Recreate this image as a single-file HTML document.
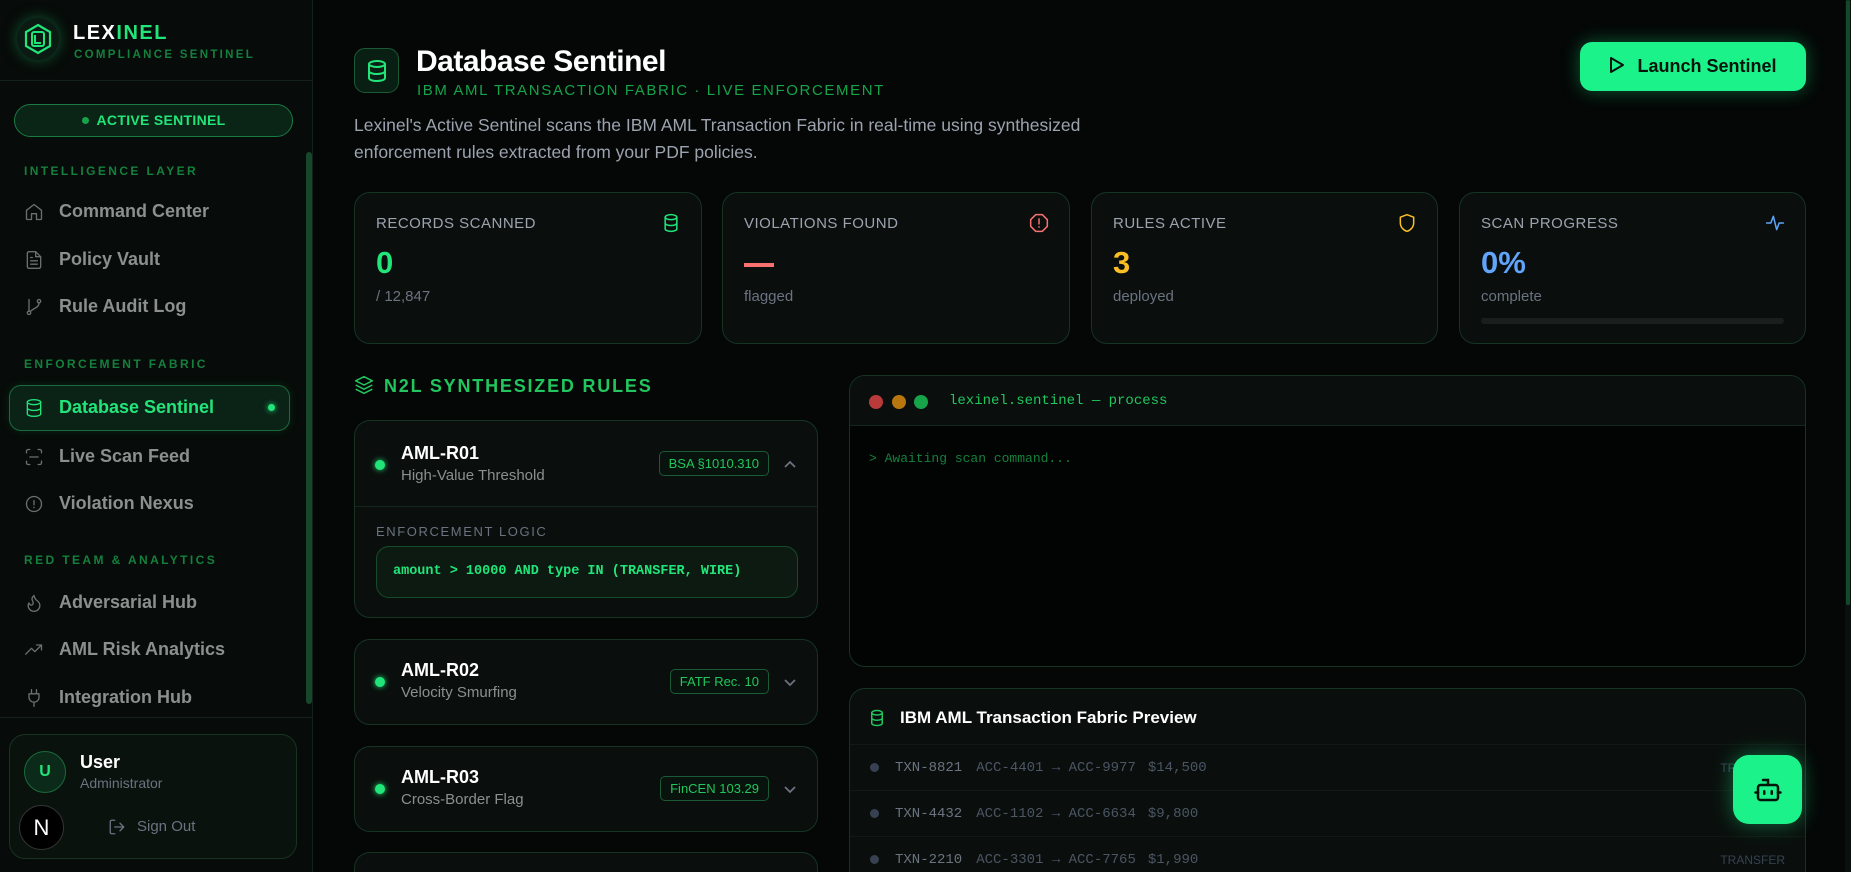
<!DOCTYPE html>
<html><head><meta charset="utf-8"><style>
*{box-sizing:border-box;margin:0;padding:0}
html,body{width:1851px;height:872px;overflow:hidden}
body{background:#040706;font-family:"Liberation Sans",sans-serif;color:#e5e7eb}
#wrap{position:relative;width:1851px;height:872px;overflow:hidden}
.sb{position:absolute;left:0;top:0;width:313px;height:872px;background:#070b09;border-right:1px solid #14201a}
.abs{position:absolute}
.sec{position:absolute;left:24px;font-size:12px;font-weight:bold;letter-spacing:2.4px;color:#15803d}
.nav{position:absolute;left:24px;display:flex;align-items:center;gap:15px;font-size:18px;color:#8b8f8d;font-weight:bold}
.nav svg{width:20px;height:20px;stroke:#6b6f6d;fill:none;stroke-width:1.6;stroke-linecap:round;stroke-linejoin:round}
.card{position:absolute;background:#0a0f0d;border:1px solid #163323;border-radius:16px}
.lbl{position:absolute;left:21px;top:22px;font-size:15px;color:#9ca3af;letter-spacing:.5px}
.num{position:absolute;left:21px;top:52px;font-size:31px;font-weight:bold}
.sub{position:absolute;left:21px;top:95px;font-size:15px;color:#6b7280}
.ic{position:absolute;right:20px;top:20px;width:20px;height:20px;fill:none;stroke-width:1.8;stroke-linecap:round;stroke-linejoin:round}
.rule .dot{position:absolute;left:20px;width:10px;height:10px;border-radius:50%;background:#22e57a;box-shadow:0 0 6px #22e57a}
.rt{position:absolute;left:46px;font-size:18px;font-weight:bold;color:#fff}
.rs{position:absolute;left:46px;font-size:15px;color:#8b8f8d}
.tag{position:absolute;right:48px;height:25px;border:1px solid #1b5a36;border-radius:5px;font-size:13px;color:#22c55e;padding:0 9px;line-height:23px;background:#07130c}
.chev{position:absolute;right:20px;width:14px;height:14px;fill:none;stroke:#6b7280;stroke-width:1.8}
.row{position:absolute;left:0;right:0;height:46px;border-top:1px solid #111815;font-family:"Liberation Mono",monospace;font-size:14px;color:#4b5563;display:flex;align-items:center}
</style></head><body><div id="wrap">
<div class="sb">
  <div class="abs" style="left:17px;top:18px;width:42px;height:42px;border-radius:50%;background:#0b1a12;box-shadow:0 0 14px #0f5a33"></div>
  <svg class="abs" style="left:20px;top:21px" width="36" height="36" viewBox="0 0 36 36"><polygon points="18,4 30,11 30,25 18,32 6,25 6,11" fill="none" stroke="#22e57a" stroke-width="2.2"/><rect x="12" y="11" width="12" height="14" rx="2" fill="none" stroke="#22e57a" stroke-width="2"/><path d="M15 14v8h6" fill="none" stroke="#22e57a" stroke-width="2"/></svg>
  <div class="abs" style="left:73px;top:22px;font-size:20px;font-weight:bold;letter-spacing:1.5px;color:#fff">LEX<span style="color:#22e57a">INEL</span></div>
  <div class="abs" style="left:74px;top:49px;font-size:11.5px;font-weight:bold;letter-spacing:2.3px;color:#15803d">COMPLIANCE SENTINEL</div>
  <div class="abs" style="left:0;top:80px;width:313px;border-top:1px solid #14201a"></div>
  <div class="abs" style="left:14px;top:104px;width:279px;height:33px;border:1px solid #1a7a44;border-radius:17px;background:#0a2416;text-align:center;line-height:31px;font-size:14px;font-weight:bold;color:#22e57a;letter-spacing:.3px"><span style="display:inline-block;width:7px;height:7px;border-radius:50%;background:#16a34a;margin-right:8px;vertical-align:middle;position:relative;top:-1px"></span>ACTIVE SENTINEL</div>
  <div class="abs" style="left:306px;top:152px;width:6px;height:552px;border-radius:3px;background:#14472c"></div>
  <div class="sec" style="top:164px">INTELLIGENCE LAYER</div>
  <div class="nav" style="top:201px"><svg viewBox="0 0 24 24"><path d="M3 10l9-7 9 7v10a1 1 0 0 1-1 1h-5v-7h-6v7H4a1 1 0 0 1-1-1z"/></svg>Command Center</div>
  <div class="nav" style="top:249px"><svg viewBox="0 0 24 24"><path d="M14 2H6a2 2 0 0 0-2 2v16a2 2 0 0 0 2 2h12a2 2 0 0 0 2-2V8z"/><path d="M14 2v6h6M8 13h8M8 17h8M8 9h2"/></svg>Policy Vault</div>
  <div class="nav" style="top:296px"><svg viewBox="0 0 24 24"><circle cx="6" cy="19" r="2"/><circle cx="18" cy="5" r="2"/><path d="M6 3v14M18 7c0 6-6 6-10 10"/></svg>Rule Audit Log</div>
  <div class="sec" style="top:357px">ENFORCEMENT FABRIC</div>
  <div class="abs" style="left:9px;top:385px;width:281px;height:46px;border:1px solid #1a6a3c;border-radius:12px;background:#0b2217;box-shadow:0 0 10px rgba(34,229,122,.12)"></div>
  <div class="nav" style="top:397px;color:#22e57a"><svg viewBox="0 0 24 24" style="stroke:#22e57a"><ellipse cx="12" cy="5" rx="8" ry="3"/><path d="M4 5v14c0 1.7 3.6 3 8 3s8-1.3 8-3V5M4 12c0 1.7 3.6 3 8 3s8-1.3 8-3"/></svg>Database Sentinel</div>
  <div class="abs" style="left:268px;top:404px;width:7px;height:7px;border-radius:50%;background:#22e57a;box-shadow:0 0 6px #22e57a"></div>
  <div class="nav" style="top:446px"><svg viewBox="0 0 24 24"><path d="M3 7V5a2 2 0 0 1 2-2h2M17 3h2a2 2 0 0 1 2 2v2M21 17v2a2 2 0 0 1-2 2h-2M7 21H5a2 2 0 0 1-2-2v-2M7 12h10"/></svg>Live Scan Feed</div>
  <div class="nav" style="top:493px"><svg viewBox="0 0 24 24"><circle cx="12" cy="12" r="9"/><path d="M12 8v5M12 16v.5"/></svg>Violation Nexus</div>
  <div class="sec" style="top:553px">RED TEAM &amp; ANALYTICS</div>
  <div class="nav" style="top:592px"><svg viewBox="0 0 24 24"><path d="M8.5 14.5A2.5 2.5 0 0 0 11 12c0-1.4-.5-2-1-3-1-2.1-.2-4 2-6 .5 2.5 2 4.9 4 6.5 2 1.6 3 3.5 3 5.5a7 7 0 1 1-14 0c0-1.2.4-2.300 1-3.1.3 1.5 1.2 2.6 2.5 2.6z"/></svg>Adversarial Hub</div>
  <div class="nav" style="top:639px"><svg viewBox="0 0 24 24"><path d="M2 17l7-7 4 4 8-8M15 6h6v6"/></svg>AML Risk Analytics</div>
  <div class="nav" style="top:687px"><svg viewBox="0 0 24 24"><path d="M9 2v5M15 2v5M6 7h12v4a6 6 0 0 1-12 0zM12 17v5"/></svg>Integration Hub</div>
  <div class="abs" style="left:0;top:717px;width:313px;border-top:1px solid #14201a"></div>
  <div class="abs" style="left:9px;top:734px;width:288px;height:125px;border:1px solid #163323;border-radius:16px;background:#0a120e"></div>
  <div class="abs" style="left:24px;top:751px;width:42px;height:42px;border-radius:50%;background:#0b2a19;border:1px solid #1a6a3c;text-align:center;line-height:40px;font-weight:bold;font-size:16px;color:#22e57a">U</div>
  <div class="abs" style="left:80px;top:752px;font-size:18px;font-weight:bold;color:#fff">User</div>
  <div class="abs" style="left:80px;top:775px;font-size:14px;color:#6b7280">Administrator</div>
  <div class="abs" style="left:19px;top:805px;width:45px;height:45px;border-radius:50%;background:#000;border:1px solid #333;text-align:center;line-height:43px;font-size:22px;color:#fff">N</div>
  <svg class="abs" style="left:108px;top:818px" width="18" height="18" viewBox="0 0 24 24" fill="none" stroke="#6b7280" stroke-width="1.8" stroke-linecap="round" stroke-linejoin="round"><path d="M9 21H5a2 2 0 0 1-2-2V5a2 2 0 0 1 2-2h4M16 17l5-5-5-5M21 12H9"/></svg>
  <div class="abs" style="left:137px;top:818px;font-size:15px;color:#6b7280">Sign Out</div>
</div>

<div class="abs" style="left:354px;top:48px;width:45px;height:45px;border:1px solid #1a5a36;border-radius:11px;background:#0a1f14"></div>
<svg class="abs" style="left:365px;top:59px" width="24" height="24" viewBox="0 0 24 24" fill="none" stroke="#22e57a" stroke-width="2"><ellipse cx="12" cy="5" rx="8" ry="3"/><path d="M4 5v14c0 1.7 3.6 3 8 3s8-1.3 8-3V5M4 12c0 1.7 3.6 3 8 3s8-1.3 8-3"/></svg>
<div class="abs" style="left:416px;top:45px;font-size:30px;font-weight:bold;color:#fff;letter-spacing:-.5px">Database Sentinel</div>
<div class="abs" style="left:417px;top:82px;font-size:15px;color:#16a34a;letter-spacing:1.6px">IBM AML TRANSACTION FABRIC · LIVE ENFORCEMENT</div>
<div class="abs" style="left:354px;top:112px;width:790px;font-size:17.5px;line-height:27px;color:#9ca3af">Lexinel's Active Sentinel scans the IBM AML Transaction Fabric in real-time using synthesized enforcement rules extracted from your PDF policies.</div>
<div class="abs" style="left:1580px;top:42px;width:226px;height:49px;border-radius:12px;background:#1cf28a;box-shadow:0 0 18px rgba(28,242,138,.35);color:#04140b;font-size:18px;font-weight:bold;line-height:49px;text-align:center"><svg width="16" height="18" viewBox="0 0 16 18" style="vertical-align:-2px;margin-right:12px"><path d="M2 2l12 7-12 7z" fill="none" stroke="#04140b" stroke-width="2" stroke-linejoin="round"/></svg>Launch Sentinel</div>

<div class="card" style="left:354px;top:192px;width:348px;height:152px"><div class="lbl">RECORDS SCANNED</div><svg class="ic" viewBox="0 0 24 24" stroke="#22e57a"><ellipse cx="12" cy="5" rx="7" ry="3"/><path d="M5 5v14c0 1.7 3 3 7 3s7-1.3 7-3V5M5 12c0 1.7 3 3 7 3s7-1.3 7-3"/></svg><div class="num" style="color:#22e57a">0</div><div class="sub">/ 12,847</div></div>
<div class="card" style="left:722px;top:192px;width:348px;height:152px"><div class="lbl">VIOLATIONS FOUND</div><svg class="ic" viewBox="0 0 24 24" stroke="#f87171"><polygon points="8,2 16,2 22,8 22,16 16,22 8,22 2,16 2,8"/><path d="M12 7v6M12 16.5v.5"/></svg><div class="abs" style="left:21px;top:70px;width:30px;height:4px;background:#f87171"></div><div class="sub">flagged</div></div>
<div class="card" style="left:1091px;top:192px;width:347px;height:152px"><div class="lbl">RULES ACTIVE</div><svg class="ic" viewBox="0 0 24 24" stroke="#fbbf24"><path d="M12 2l8 3v7c0 5-4 9-8 10-4-1-8-5-8-10V5z"/></svg><div class="num" style="color:#fbbf24">3</div><div class="sub">deployed</div></div>
<div class="card" style="left:1459px;top:192px;width:347px;height:152px"><div class="lbl">SCAN PROGRESS</div><svg class="ic" viewBox="0 0 24 24" stroke="#60a5fa"><path d="M2 12h5l3-8 4 16 3-8h5"/></svg><div class="num" style="color:#60a5fa">0%</div><div class="sub">complete</div><div class="abs" style="left:21px;right:21px;top:125px;height:6px;border-radius:3px;background:#1a1f1d"></div></div>

<svg class="abs" style="left:354px;top:375px" width="20" height="20" viewBox="0 0 24 24" fill="none" stroke="#22c55e" stroke-width="1.8" stroke-linejoin="round"><path d="M12 2l10 5-10 5L2 7z"/><path d="M2 12l10 5 10-5M2 17l10 5 10-5"/></svg>
<div class="abs" style="left:384px;top:376px;font-size:18px;font-weight:bold;color:#22c55e;letter-spacing:1.8px">N2L SYNTHESIZED RULES</div>

<div class="card rule" style="left:354px;top:420px;width:464px;height:198px">
  <div class="dot" style="top:39px"></div><div class="rt" style="top:22px">AML-R01</div><div class="rs" style="top:46px">High-Value Threshold</div>
  <div class="tag" style="top:30px">BSA §1010.310</div><svg class="chev" style="top:37px" viewBox="0 0 14 14"><path d="M2 9l5-5 5 5"/></svg>
  <div class="abs" style="left:0;right:0;top:85px;border-top:1px solid #14261c"></div>
  <div class="abs" style="left:21px;top:103px;font-size:13px;color:#6b7280;letter-spacing:1.6px">ENFORCEMENT LOGIC</div>
  <div class="abs" style="left:21px;top:125px;width:422px;height:52px;border:1px solid #164a2c;border-radius:13px;background:#0c1a12;font-family:'Liberation Mono',monospace;font-size:13.5px;font-weight:bold;color:#22e57a;line-height:50px;padding-left:16px">amount &gt; 10000 AND type IN (TRANSFER, WIRE)</div>
</div>
<div class="card rule" style="left:354px;top:639px;width:464px;height:86px">
  <div class="dot" style="top:37px"></div><div class="rt" style="top:20px">AML-R02</div><div class="rs" style="top:44px">Velocity Smurfing</div>
  <div class="tag" style="top:29px">FATF Rec. 10</div><svg class="chev" style="top:35px" viewBox="0 0 14 14"><path d="M2 5l5 5 5-5"/></svg>
</div>
<div class="card rule" style="left:354px;top:746px;width:464px;height:86px">
  <div class="dot" style="top:37px"></div><div class="rt" style="top:20px">AML-R03</div><div class="rs" style="top:44px">Cross-Border Flag</div>
  <div class="tag" style="top:29px">FinCEN 103.29</div><svg class="chev" style="top:35px" viewBox="0 0 14 14"><path d="M2 5l5 5 5-5"/></svg>
</div>
<div class="card" style="left:354px;top:852px;width:464px;height:60px"></div>

<div class="card" style="left:849px;top:375px;width:957px;height:292px;background:#020403;overflow:hidden">
  <div class="abs" style="left:0;right:0;top:0;height:50px;background:#0a0f0d;border-bottom:1px solid #14261c"></div>
  <div class="abs" style="left:19px;top:19px;width:14px;height:14px;border-radius:50%;background:#b83a3a"></div>
  <div class="abs" style="left:42px;top:19px;width:14px;height:14px;border-radius:50%;background:#b8760f"></div>
  <div class="abs" style="left:64px;top:19px;width:14px;height:14px;border-radius:50%;background:#16a34a"></div>
  <div class="abs" style="left:99px;top:17px;font-family:'Liberation Mono',monospace;font-size:14px;color:#22c55e">lexinel.sentinel — process</div>
  <div class="abs" style="left:19px;top:75px;font-family:'Liberation Mono',monospace;font-size:13px;color:#15803d">&gt; Awaiting scan command...</div>
</div>

<div class="card" style="left:849px;top:688px;width:957px;height:220px;overflow:hidden">
  <svg class="abs" style="left:18px;top:19px" width="18" height="20" viewBox="0 0 24 24" fill="none" stroke="#22c55e" stroke-width="2"><ellipse cx="12" cy="5" rx="7" ry="3"/><path d="M5 5v14c0 1.7 3 3 7 3s7-1.3 7-3V5M5 12c0 1.7 3 3 7 3s7-1.3 7-3"/></svg>
  <div class="abs" style="left:50px;top:19px;font-size:17px;font-weight:bold;color:#fff">IBM AML Transaction Fabric Preview</div>
  <div class="row" style="top:55px"><span style="width:9px;height:9px;border-radius:50%;background:#374151;margin:0 16px 0 20px"></span><span style="color:#6b7280;margin-right:14px">TXN-8821</span>ACC-4401 → ACC-9977 <span style="margin-left:12px">$14,500</span><span style="position:absolute;right:20px;font-family:'Liberation Sans';font-size:12px;color:#374151">TRANSFER</span></div>
  <div class="row" style="top:101px"><span style="width:9px;height:9px;border-radius:50%;background:#374151;margin:0 16px 0 20px"></span><span style="color:#6b7280;margin-right:14px">TXN-4432</span>ACC-1102 → ACC-6634 <span style="margin-left:12px">$9,800</span><span style="position:absolute;right:20px;font-family:'Liberation Sans';font-size:12px;color:#374151">CASH</span></div>
  <div class="row" style="top:147px"><span style="width:9px;height:9px;border-radius:50%;background:#374151;margin:0 16px 0 20px"></span><span style="color:#6b7280;margin-right:14px">TXN-2210</span>ACC-3301 → ACC-7765 <span style="margin-left:12px">$1,990</span><span style="position:absolute;right:20px;font-family:'Liberation Sans';font-size:12px;color:#374151">TRANSFER</span></div>
</div>

<div class="abs" style="left:1733px;top:755px;width:69px;height:69px;border-radius:16px;background:#1cf28a;box-shadow:0 0 20px rgba(28,242,138,.4)"></div>
<svg class="abs" style="left:1753px;top:775px" width="30" height="30" viewBox="0 0 24 24" fill="none" stroke="#04140b" stroke-width="2" stroke-linecap="round"><path d="M12 8V4H8"/><rect x="4" y="8" width="16" height="12" rx="2"/><path d="M2 14h2M20 14h2M9 13v2M15 13v2"/></svg>
<div class="abs" style="left:1845px;top:0;width:6px;height:872px;background:#0b0f0d"></div>
<div class="abs" style="left:1846px;top:0;width:4px;height:605px;border-radius:2px;background:#14472c"></div>
</div></body></html>
